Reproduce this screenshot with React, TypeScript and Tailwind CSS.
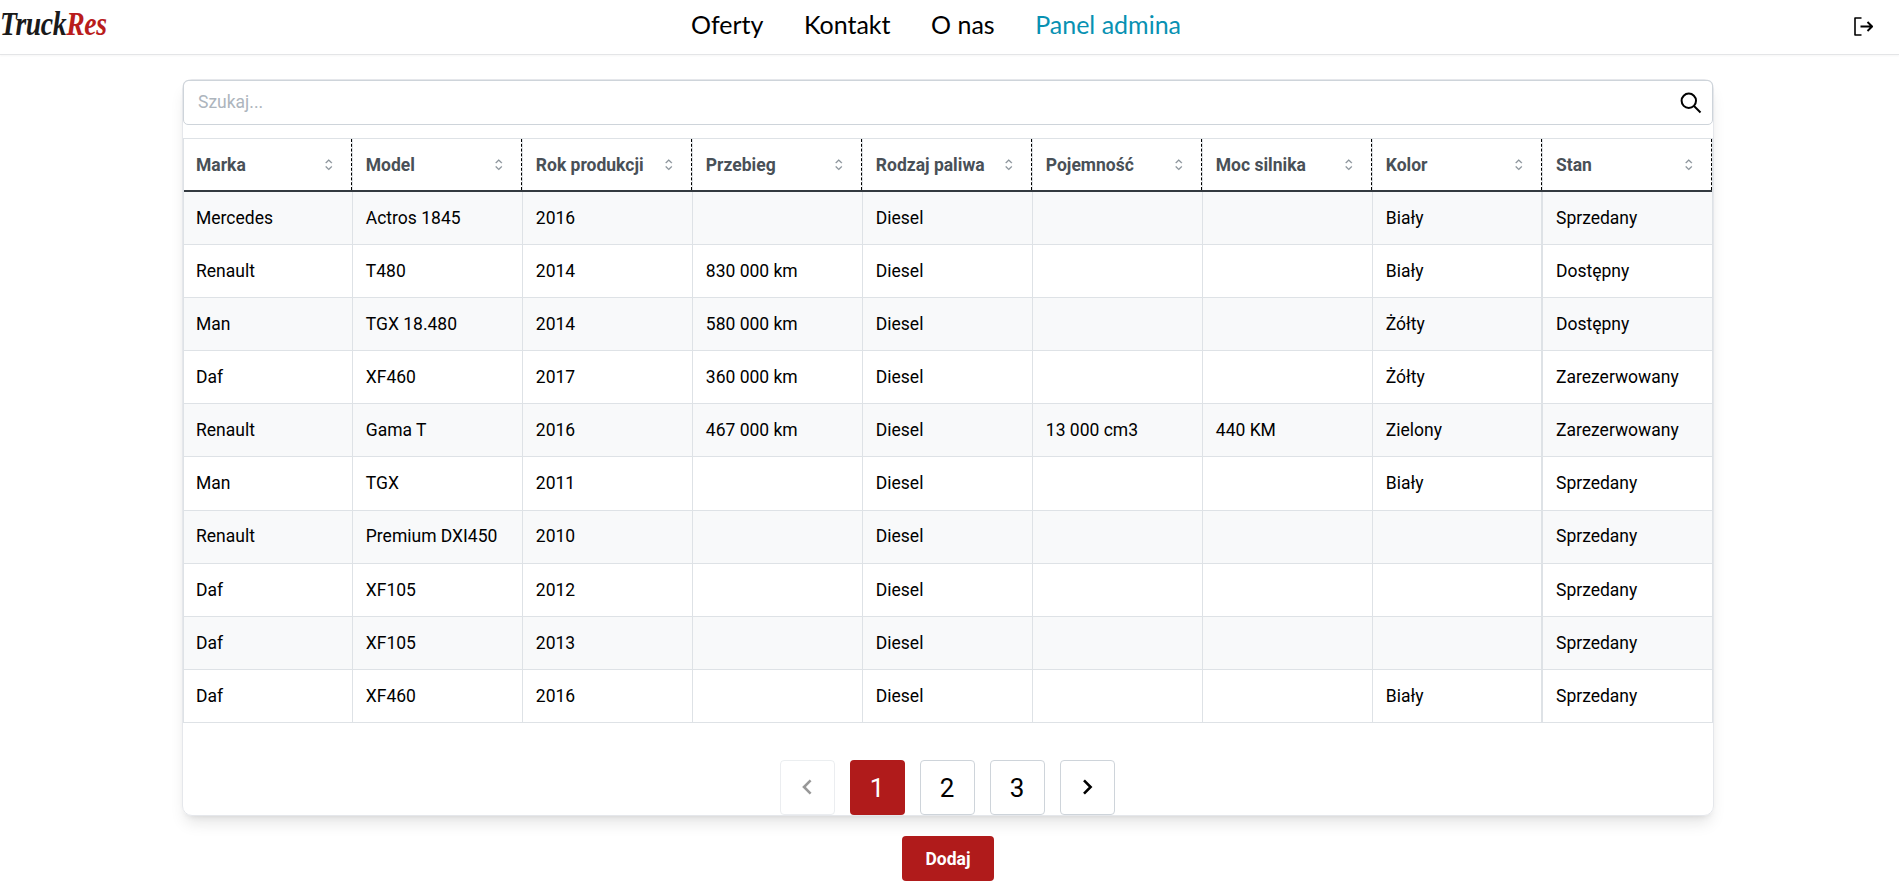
const columns = ["Marka", "Model", "Rok produkcji", "Przebieg", "Rodzaj paliwa", "Pojemność", "Moc silnika", "Kolor", "Stan"];

const rows = [
  ["Mercedes", "Actros 1845", "2016", "", "Diesel", "", "", "Biały", "Sprzedany"],
  ["Renault", "T480", "2014", "830 000 km", "Diesel", "", "", "Biały", "Dostępny"],
  ["Man", "TGX 18.480", "2014", "580 000 km", "Diesel", "", "", "Żółty", "Dostępny"],
  ["Daf", "XF460", "2017", "360 000 km", "Diesel", "", "", "Żółty", "Zarezerwowany"],
  ["Renault", "Gama T", "2016", "467 000 km", "Diesel", "13 000 cm3", "440 KM", "Zielony", "Zarezerwowany"],
  ["Man", "TGX", "2011", "", "Diesel", "", "", "Biały", "Sprzedany"],
  ["Renault", "Premium DXI450", "2010", "", "Diesel", "", "", "", "Sprzedany"],
  ["Daf", "XF105", "2012", "", "Diesel", "", "", "", "Sprzedany"],
  ["Daf", "XF105", "2013", "", "Diesel", "", "", "", "Sprzedany"],
  ["Daf", "XF460", "2016", "", "Diesel", "", "", "Biały", "Sprzedany"],
];

function SortIcon() {
  return (
    <svg width="17.5" height="17.5" viewBox="0 0 15 15" fill="#868e96" stroke="#868e96" strokeWidth="0.25">
      <path
        fillRule="evenodd"
        clipRule="evenodd"
        d="M4.93179 5.43179C4.75605 5.60753 4.75605 5.89245 4.93179 6.06819C5.10753 6.24392 5.39245 6.24392 5.56819 6.06819L7.49999 4.13638L9.43179 6.06819C9.60753 6.24392 9.89245 6.24392 10.0682 6.06819C10.2439 5.89245 10.2439 5.60753 10.0682 5.43179L7.81819 3.18179C7.73379 3.0974 7.61933 3.04999 7.49999 3.04999C7.38064 3.04999 7.26618 3.0974 7.18179 3.18179L4.93179 5.43179ZM10.0682 9.56819C10.2439 9.39245 10.2439 9.10753 10.0682 8.93179C9.89245 8.75606 9.60753 8.75606 9.43179 8.93179L7.49999 10.8636L5.56819 8.93179C5.39245 8.75606 5.10753 8.75606 4.93179 8.93179C4.75605 9.10753 4.75605 9.39245 4.93179 9.56819L7.18179 11.8182C7.35753 11.9939 7.64245 11.9939 7.81819 11.8182L10.0682 9.56819Z"
      />
    </svg>
  );
}

function Chevron({ left = false }: { left?: boolean }) {
  return (
    <svg width="28" height="28" viewBox="0 0 28 28" fill="none" stroke="currentColor" strokeWidth="2.6">
      <path d={left ? "M17.6 7.4L11 14l6.6 6.6" : "M11 7.4l6.6 6.6-6.6 6.6"} />
    </svg>
  );
}

function Header() {
  return (
    <header className="flex h-[55px] items-start justify-between border-b border-[#e4e5e7] shadow-[0_1px_2px_rgba(0,0,0,0.04)]">
      <div className="w-[200px] pt-[7px]">
        <div className="w-max origin-left scale-x-[0.84] font-['Liberation_Serif',serif] text-[33px] font-bold italic leading-[34px] tracking-[-0.5px] text-[#1a1a1a]">
          Truck<span className="text-[#b91c1c]">Res</span>
        </div>
      </div>
      <nav className="flex gap-[40.5px] pt-[3px] pr-[27px] font-['Lato',sans-serif] text-[25px] leading-[42px] text-black">
        <a>Oferty</a>
        <a>Kontakt</a>
        <a>O nas</a>
        <a className="text-[#0891b2]">Panel admina</a>
      </nav>
      <div className="flex w-[200px] justify-end pt-[15px] pr-[24px]">
        <svg width="24" height="24" viewBox="0 0 24 24" fill="none" stroke="#000" strokeWidth="1.6" strokeLinejoin="round">
          <path d="M10.5 3H4v17h6.5" />
          <path d="M9.5 11.5h11.5M16.5 7l4.6 4.5-4.6 4.5" strokeWidth="1.9" />
        </svg>
      </div>
    </header>
  );
}

export default function App() {
  return (
    <div className="h-[895px] overflow-hidden bg-white font-['Roboto',sans-serif] text-[17.5px] text-black">
      <Header />
      <main className="flex flex-col items-center pt-[24px] pr-[3px]">
        <section className="h-[737px] w-[1532px] rounded-[10px] border border-[#e5e7eb] shadow-[0_10px_15px_-3px_rgba(0,0,0,0.1),0_4px_6px_-4px_rgba(0,0,0,0.1)]">
          <div className="flex h-[45px] items-center justify-between rounded-[5px] border border-[#ced4da] pr-[9px] pl-[14px]">
            <span className="text-[#adb5bd]">Szukaj...</span>
            <svg width="24" height="24" viewBox="0 0 24 24" fill="none" stroke="#000" strokeWidth="2">
              <circle cx="9.8" cy="9.8" r="7.2" />
              <path d="M15 15l6.5 6.5" />
            </svg>
          </div>
          <div className="mt-[13px] border border-b-0 border-[#dee2e6]">
            <div className="grid h-[53px] grid-cols-[169px_repeat(7,170px)_169px] border-b-2 border-[#343a40]">
              {columns.map((c) => (
                <div key={c} className="flex border-r border-[#dee2e6] pl-[12.8px] first:pl-3 last:border-r-0 last:pl-[13px]">
                  <div className="flex flex-1 items-center justify-between border-r border-dashed border-black pt-px pr-[14px]">
                    <span className="whitespace-nowrap font-bold text-[#495057]">{c}</span>
                    <SortIcon />
                  </div>
                </div>
              ))}
            </div>
            {rows.map((r, i) => (
              <div key={i} className="grid h-[53.1px] grid-cols-[169px_repeat(7,170px)_169px] border-b border-[#dee2e6] odd:bg-white even:bg-[#f8f9fa]">
                {r.map((v, j) => (
                  <div key={j} className="flex items-center border-r border-[#dee2e6] pl-[12.8px] first:pl-3 last:border-r-0 last:pl-[13px] nth-8:border-r-2">{v}</div>
                ))}
              </div>
            ))}
          </div>
          <div className="mt-[37px] flex justify-center gap-[15px] pr-[2px] text-[26px]">
            <div className="flex size-[55px] items-center justify-center rounded-[4px] border border-[#ced4da] opacity-40"><Chevron left /></div>
            <div className="flex size-[55px] items-center justify-center rounded-[4px] bg-[#b01b1b] pt-[2px] text-white">1</div>
            <div className="flex size-[55px] items-center justify-center rounded-[4px] border border-[#ced4da] pt-[2px]">2</div>
            <div className="flex size-[55px] items-center justify-center rounded-[4px] border border-[#ced4da] pt-[2px]">3</div>
            <div className="flex size-[55px] items-center justify-center rounded-[4px] border border-[#ced4da]"><Chevron /></div>
          </div>
        </section>
        <button className="mt-5 h-[45px] w-[92px] rounded-[4px] bg-[#b01b1b] pt-px font-bold text-white">Dodaj</button>
      </main>
    </div>
  );
}
